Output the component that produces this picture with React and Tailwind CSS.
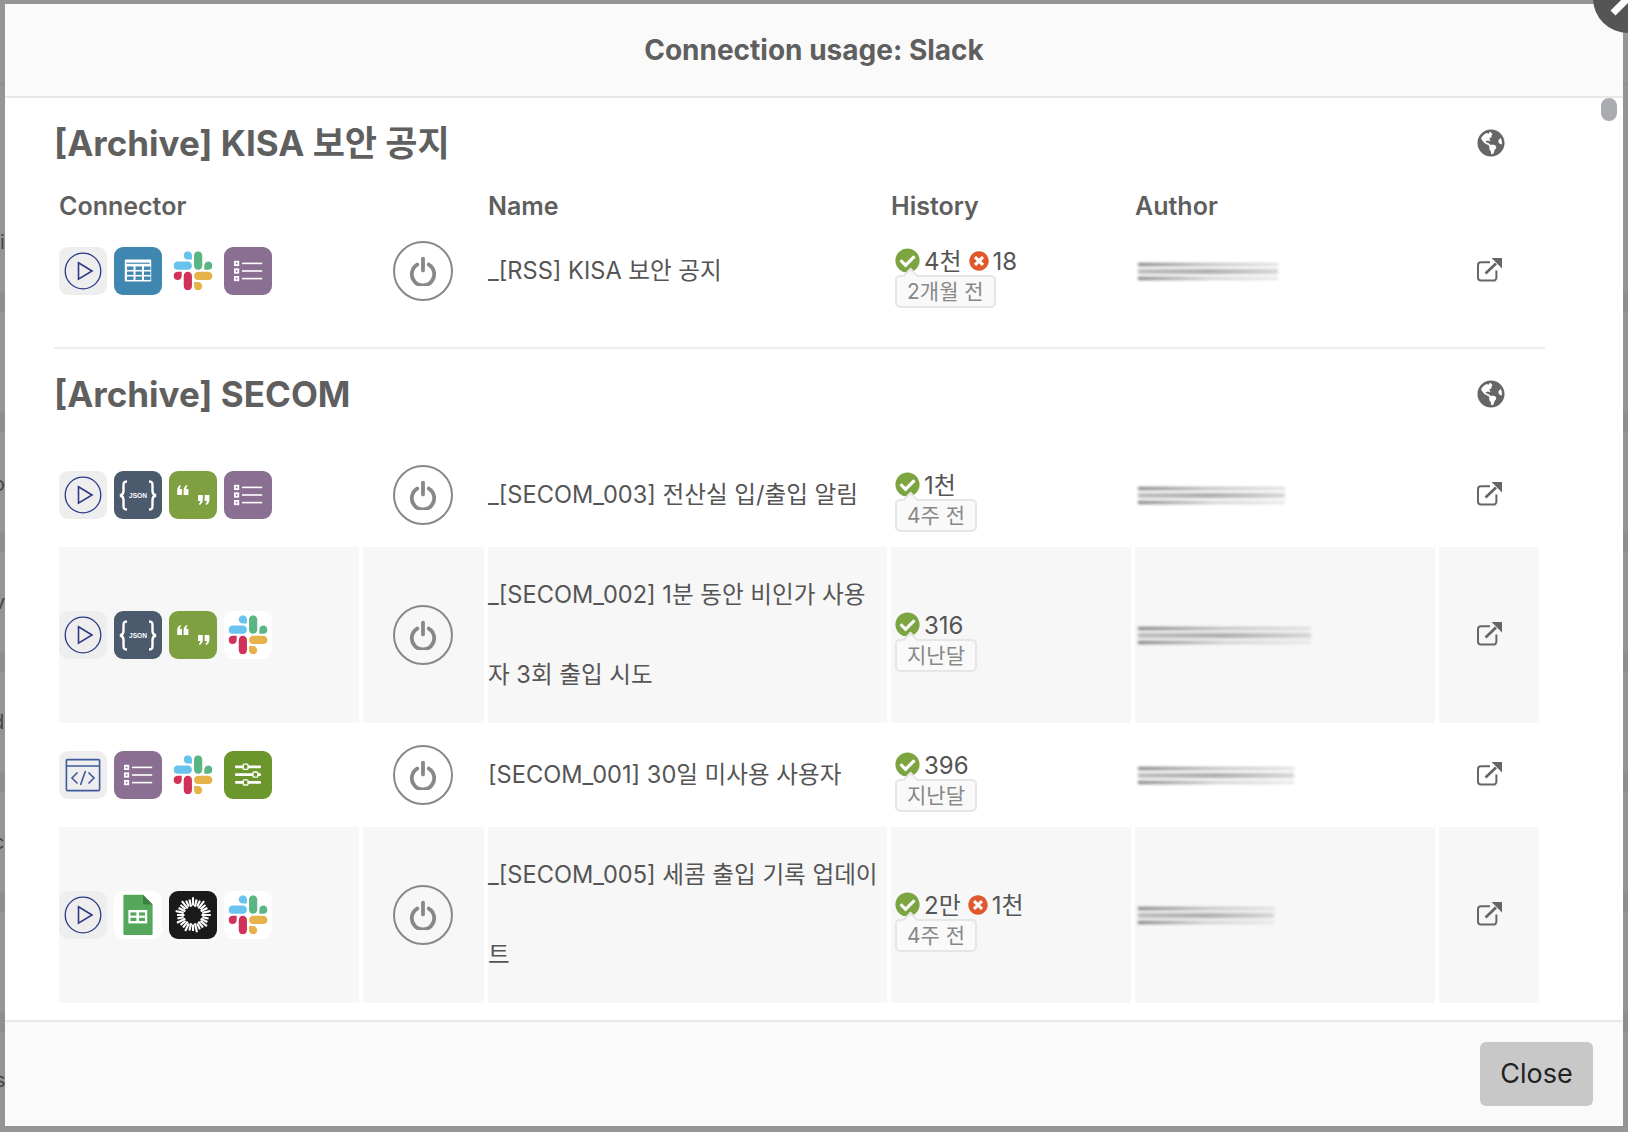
import React from "react";
import { FaCheckCircle, FaTimesCircle, FaGlobeAmericas } from "react-icons/fa";

const Tile = ({ bg, children }) => (
  <div className={`w-12 h-12 rounded-[9px] overflow-hidden shrink-0 ${bg}`}>
    <svg width="48" height="48" viewBox="0 0 48 48" fill="none">{children}</svg>
  </div>
);

const PlayIcon = () => (
  <Tile bg="bg-[#eeeeee]">
    <circle cx="24" cy="24" r="17.8" stroke="#2c3a86" strokeWidth="1.3" />
    <path d="M19.5 15.8 L33 24 L19.5 32.2 Z" stroke="#2c3a86" strokeWidth="1.6" strokeLinejoin="miter" />
  </Tile>
);

const TableIcon = () => {
  const cells = [];
  [19.5, 24.5, 29.5].forEach((y) =>
    [13, 21.5, 30].forEach((x) => cells.push(<rect key={`${x}-${y}`} x={x} y={y} width="6.5" height="3.4" fill="#3f86b0" />))
  );
  return (
    <Tile bg="bg-[#3f86b0]">
      <rect x="10.8" y="12.4" width="26.4" height="22.2" rx="1" fill="#fff" />
      <rect x="12.4" y="15.6" width="23.2" height="1.2" fill="#3f86b0" />
      {cells}
    </Tile>
  );
};

const SlackIcon = () => (
  <Tile bg="bg-white">
    <svg x="4.5" y="4.3" width="39" height="39" viewBox="0 0 122.8 122.8">
      <path fill="#cf3259" d="M25.8 77.6c0 7.1-5.8 12.9-12.9 12.9S0 84.7 0 77.6s5.8-12.9 12.9-12.9h12.9v12.9zM32.3 77.6c0-7.1 5.8-12.9 12.9-12.9s12.9 5.8 12.9 12.9v32.3c0 7.1-5.8 12.9-12.9 12.9s-12.9-5.8-12.9-12.9V77.6z" />
      <path fill="#68c3ee" d="M45.2 25.8c-7.1 0-12.9-5.8-12.9-12.9S38.1 0 45.2 0s12.9 5.8 12.9 12.9v12.9H45.2zM45.2 32.3c7.1 0 12.9 5.8 12.9 12.9s-5.8 12.9-12.9 12.9H12.9C5.8 58.1 0 52.3 0 45.2s5.8-12.9 12.9-12.9h32.3z" />
      <path fill="#5ab682" d="M97 45.2c0-7.1 5.8-12.9 12.9-12.9s12.9 5.8 12.9 12.9-5.8 12.9-12.9 12.9H97V45.2zM90.5 45.2c0 7.1-5.8 12.9-12.9 12.9s-12.9-5.8-12.9-12.9V12.9C64.7 5.8 70.5 0 77.6 0s12.9 5.8 12.9 12.9v32.3z" />
      <path fill="#e5b34a" d="M77.6 97c7.1 0 12.9 5.8 12.9 12.9s-5.8 12.9-12.9 12.9-12.9-5.8-12.9-12.9V97h12.9zM77.6 90.5c-7.1 0-12.9-5.8-12.9-12.9s5.8-12.9 12.9-12.9h32.3c7.1 0 12.9 5.8 12.9 12.9s-5.8 12.9-12.9 12.9H77.6z" />
    </svg>
  </Tile>
);

const ListIcon = () => (
  <Tile bg="bg-[#8a6f93]">
    {[16.4, 24, 31.6].map((y) => (
      <g key={y}>
        <rect x="10" y={y - 2.6} width="5.2" height="5.2" fill="#fff" />
        <rect x="11.8" y={y - 0.8} width="1.6" height="1.6" fill="#8a6f93" />
        <rect x="18" y={y - 0.8} width="20.2" height="1.6" fill="#fff" />
      </g>
    ))}
  </Tile>
);

const JsonIcon = () => (
  <Tile bg="bg-[#4b5b6d]">
    <path d="M13 10.5 C9.5 10.5 9.5 12 9.5 15 V20 C9.5 23 8.5 24 6 24.5 C8.5 25 9.5 26 9.5 29 V34 C9.5 37 9.5 38.5 13 38.5" stroke="#fff" strokeWidth="2.4" />
    <path d="M35 10.5 C38.5 10.5 38.5 12 38.5 15 V20 C38.5 23 39.5 24 42 24.5 C39.5 25 38.5 26 38.5 29 V34 C38.5 37 38.5 38.5 35 38.5" stroke="#fff" strokeWidth="2.4" />
    <text x="24" y="26.6" textAnchor="middle" fontFamily="'Liberation Sans', sans-serif" fontWeight="700" fontSize="6.6" fill="#fff">JSON</text>
  </Tile>
);

const quote = "M0 0 h4.8 v4.8 c0 2.4-1.1 4-3 5.2 l-1-1.1 c.9-.7 1.4-1.6 1.5-2.9 H0 Z";

const QuoteIcon = () => (
  <Tile bg="bg-[#7ea040]">
    <g fill="#fff">
      <path d={quote} transform="translate(13 24) rotate(180)" />
      <path d={quote} transform="translate(19.4 24) rotate(180)" />
      <path d={quote} transform="translate(29 24)" />
      <path d={quote} transform="translate(35.6 24)" />
    </g>
  </Tile>
);

const CodeIcon = () => (
  <Tile bg="bg-[#eeeeee]">
    <rect x="7.4" y="8.6" width="33.2" height="31" rx="1" stroke="#3f5a9c" strokeWidth="1.6" />
    <path d="M7.4 15 H40.6" stroke="#3f5a9c" strokeWidth="1.6" />
    <path d="M18.5 21.5 L13 27 L18.5 32.5 M29.5 21.5 L35 27 L29.5 32.5 M26.5 20 L21.5 34" stroke="#3f5a9c" strokeWidth="1.6" />
  </Tile>
);

const FilterIcon = () => (
  <Tile bg="bg-[#6b962c]">
    {[[15.8, 19.2], [23.6, 29], [31.4, 19.2]].map(([y, x]) => (
      <g key={y}>
        <rect x="11" y={y - 1.4} width="26" height="2.8" rx="1" fill="#fff" />
        <rect x={x} y={y - 2.6} width="4.8" height="5.2" rx="1" fill="#6b962c" stroke="#fff" strokeWidth="1.3" />
      </g>
    ))}
  </Tile>
);

const SheetsIcon = () => (
  <Tile bg="bg-white">
    <path d="M10.4 3.8 H29 L38.6 13.4 V43 a1 1 0 0 1-1 1 H10.4 a1 1 0 0 1-1-1 V4.8 a1 1 0 0 1 1-1 Z" fill="#55a75c" />
    <path d="M29 3.8 L38.6 13.4 H29 Z" fill="#3c8040" />
    <rect x="14.4" y="19" width="18.8" height="13.4" fill="#fff" />
    {[[16.4, 21.4], [25, 21.4], [16.4, 26.8], [25, 26.8]].map(([x, y]) => (
      <rect key={`${x}-${y}`} x={x} y={y} width="6" height="3.2" fill="#55a75c" />
    ))}
  </Tile>
);

const SpinIcon = () => (
  <Tile bg="bg-[#1a1a1a]">
    {Array.from({ length: 28 }).map((_, i) => {
      const a = (i / 28) * Math.PI * 2;
      const r1 = i % 2 ? 9.5 : 8.5;
      const r2 = i % 3 === 0 ? 17.8 : 16;
      return (
        <line
          key={i}
          x1={24 + r1 * Math.cos(a)}
          y1={24 + r1 * Math.sin(a)}
          x2={24 + r2 * Math.cos(a)}
          y2={24 + r2 * Math.sin(a)}
          stroke="#fff"
          strokeWidth="2.1"
        />
      );
    })}
  </Tile>
);

const ICONS = {
  play: PlayIcon,
  table: TableIcon,
  slack: SlackIcon,
  list: ListIcon,
  json: JsonIcon,
  quote: QuoteIcon,
  code: CodeIcon,
  filter: FilterIcon,
  sheets: SheetsIcon,
  spin: SpinIcon,
};

const PowerButton = () => (
  <div className="w-[60px] h-[60px] rounded-full border-2 border-[#888888] flex items-center justify-center">
    <svg width="30" height="30" viewBox="0 0 30 30" fill="none" stroke="#888888" strokeWidth="3.8" strokeLinecap="round">
      <path d="M9.2 8.6 A11.2 11.2 0 1 0 20.8 8.6" />
      <path d="M15 2.6 V14.4" />
    </svg>
  </div>
);

const LinkIcon = () => (
  <svg width="27" height="25" viewBox="0 0 27 25" fill="none" stroke="#666666">
    <path d="M14 5.2 H5 a3 3 0 0 0-3 3 V20.6 a3 3 0 0 0 3 3 H17.4 a3 3 0 0 0 3-3 V13.5" strokeWidth="2" />
    <path d="M9.5 16.5 L20 6.5" strokeWidth="2.8" />
    <path d="M15.6 1 H26 V11.4 Z" fill="#666666" stroke="none" />
  </svg>
);

const Badge = ({ children }) => (
  <div className="relative self-start shrink-0 h-[33px] px-[10px] mt-[2px] flex items-center rounded-[5px] border-2 border-[#e6e6e6] bg-[#f9f9f9] text-[#888888] text-[21px] leading-none whitespace-nowrap">
    <span className="absolute -top-[7px] left-[8px] w-[11px] h-[11px] rotate-45 bg-[#f9f9f9] border-l-2 border-t-2 border-[#e6e6e6]" />
    <span className="relative">{children}</span>
  </div>
);

const History = ({ ok, err, when }) => (
  <div className="h-12 w-full flex flex-col pl-[4px]">
    <div className="h-[26px] shrink-0 flex items-center text-[24px] leading-none text-[#555555]">
      <FaCheckCircle className="text-[25px] text-[#7ca541] shrink-0" />
      <span className="ml-[4px] pt-[3px]">{ok}</span>
      {err && <FaTimesCircle className="text-[20px] text-[#e0582c] ml-[7px] mt-[2px] shrink-0" />}
      {err && <span className="ml-[4px] pt-[3px]">{err}</span>}
    </div>
    <Badge>{when}</Badge>
  </div>
);

const Smudge = ({ w }) => (
  <div className={`flex flex-col gap-[3px] blur-[1.8px] ml-[3px] ${w}`}>
    <div className="h-[3px] w-full bg-linear-to-r from-[#777777] via-[#bbbbbb] to-[#dddddd]" />
    <div className="h-[5px] w-full bg-linear-to-r from-[#bbbbbb] via-[#aaaaaa] to-[#d5d5d5]" />
    <div className="h-[3px] w-full bg-linear-to-r from-[#777777] via-[#cccccc] to-[#e5e5e5]" />
  </div>
);

const COLS = "grid grid-cols-[300px_121px_399px_240px_300px_100px] gap-x-[4px] ml-[5px]";

const Row = ({ row, shaded }) => {
  const cell = `flex items-center ${shaded ? "bg-[#f7f7f7]" : ""}`;
  return (
    <div className={`${COLS} ${row.lines === 2 ? "h-[176px]" : "h-[96px]"}`}>
      <div className={`${cell} gap-[7px]`}>
        {row.icons.map((k, i) => {
          const Icon = ICONS[k];
          return <Icon key={i} />;
        })}
      </div>
      <div className={`${cell} justify-center pr-[2px]`}>
        <PowerButton />
      </div>
      <div className={`${cell} py-[8px] pr-[4px] text-[23.6px] leading-[80px] text-[#555555]`}>
        <div>{row.name}</div>
      </div>
      <div className={cell}>
        <History ok={row.ok} err={row.err} when={row.when} />
      </div>
      <div className={cell}>
        <Smudge w={row.author} />
      </div>
      <div className={`${cell} pl-[37px] pb-[4px]`}>
        <LinkIcon />
      </div>
    </div>
  );
};

const Heading = ({ children }) => (
  <div className="h-[90px] flex items-center justify-between pr-[40px]">
    <h2 className="text-[35px] font-bold text-[#5f5f5f] leading-none">{children}</h2>
    <FaGlobeAmericas className="text-[28px] text-[#666666]" />
  </div>
);

const KISA_ROWS = [
  { icons: ["play", "table", "slack", "list"], name: "_[RSS] KISA 보안 공지", ok: "4천", err: "18", when: "2개월 전", author: "w-[140px]" },
];

const SECOM_ROWS = [
  { icons: ["play", "json", "quote", "list"], name: "_[SECOM_003] 전산실 입/출입 알림", ok: "1천", when: "4주 전", author: "w-[147px]" },
  { icons: ["play", "json", "quote", "slack"], name: "_[SECOM_002] 1분 동안 비인가 사용자 3회 출입 시도", ok: "316", when: "지난달", author: "w-[173px]", lines: 2 },
  { icons: ["code", "list", "slack", "filter"], name: "[SECOM_001] 30일 미사용 사용자", ok: "396", when: "지난달", author: "w-[156px]" },
  { icons: ["play", "sheets", "spin", "slack"], name: "_[SECOM_005] 세콤 출입 기록 업데이트", ok: "2만", err: "1천", when: "4주 전", author: "w-[136px]", lines: 2 },
];

// stripes of the page behind the dimmed backdrop, only seen at the window edges
const BANDS = ["top-[292px]", "top-[412px]", "top-[532px]", "top-[652px]", "top-[772px]", "top-[892px]", "top-[1012px]"];

const PEEK = [
  { ch: "i", cls: "top-[230px] left-[0px]" },
  { ch: "o", cls: "top-[472px] -left-[7px]" },
  { ch: "v", cls: "top-[590px] -left-[6px]" },
  { ch: "d", cls: "top-[710px] -left-[8px]" },
  { ch: "c", cls: "top-[830px] -left-[7px]" },
  { ch: "s", cls: "top-[1068px] -left-[5px]" },
];

export default function App() {
  return (
    <div className="relative w-[1628px] h-[1132px] overflow-hidden bg-[#959595] pt-[4px] pl-[5px] pr-[5px] pb-[6px] font-['Inter','Noto_Sans_CJK_KR',sans-serif]">
      {BANDS.map((b) => (
        <div key={b} className={`absolute left-0 right-0 h-[20px] bg-[#8e8e8e] ${b}`} />
      ))}
      <div className="absolute left-0 right-0 top-[83px] h-[1px] bg-[#8a8a8a]" />
      <div className="absolute left-0 top-0 w-[5px] h-full overflow-hidden">
        {PEEK.map((p) => (
          <span key={p.ch} className={`absolute text-[20px] leading-[24px] text-[#444444] ${p.cls}`}>
            {p.ch}
          </span>
        ))}
      </div>

      <div className="relative h-full bg-white flex flex-col">
        <div className="h-[94px] shrink-0 bg-[#fafafa] border-b-2 border-[#e8e8e8] flex items-center justify-center">
          <h1 className="text-[28px] font-bold text-[#5f5f5f]">Connection usage: Slack</h1>
        </div>

        <div className="relative flex-1 overflow-hidden pl-[49px] pr-[78px]">
          <Heading>[Archive] KISA 보안 공지</Heading>
          <div className={`${COLS} h-[35px] text-[25px] font-semibold text-[#5f5f5f] items-center`}>
            <div>Connector</div>
            <div />
            <div>Name</div>
            <div>History</div>
            <div>Author</div>
            <div />
          </div>
          <div className="flex flex-col gap-[4px]">
            {KISA_ROWS.map((r) => (
              <Row key={r.name} row={r} />
            ))}
          </div>

          <div className="h-[2px] bg-[#eeeeee] mt-[28px]" />

          <Heading>[Archive] SECOM</Heading>
          <div className="flex flex-col gap-[4px] mt-[8px]">
            {SECOM_ROWS.map((r, i) => (
              <Row key={r.name} row={r} shaded={i % 2 === 1} />
            ))}
          </div>

          <div className="absolute top-0 right-[6px] w-[16px] h-[23px] rounded-[8px] bg-[#a9abb0]" />
        </div>

        <div className="h-[106px] shrink-0 bg-[#fafafa] border-t-2 border-[#e8e8e8] flex items-start justify-end pt-[20px] pr-[30px]">
          <button className="w-[113px] h-[64px] rounded-[6px] bg-[#c8c8c8] text-[27px] text-[#222222]">Close</button>
        </div>
      </div>

      <div className="absolute -top-[37px] -right-[35px] w-[70px] h-[70px] rounded-full bg-[#555555]">
        <svg width="70" height="70" viewBox="0 0 70 70" stroke="#ffffff" strokeWidth="7">
          <path d="M20 50 L50 20 M20 20 L50 50" />
        </svg>
      </div>
    </div>
  );
}
